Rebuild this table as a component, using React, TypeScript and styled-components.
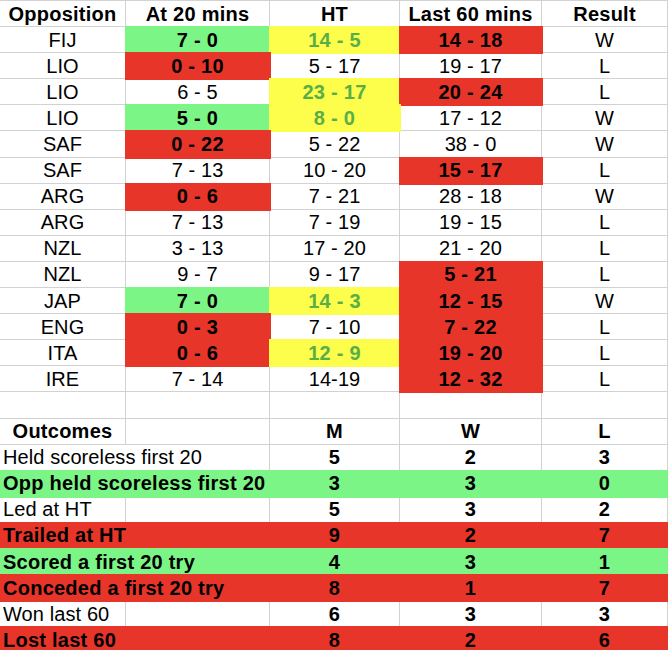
import React from "react";
import styled, { createGlobalStyle, css } from "styled-components";

const GlobalStyle = createGlobalStyle`
  html, body {
    margin: 0;
    padding: 0;
    background: #ffffff;
  }
  body {
    font-family: "Liberation Sans", Arial, sans-serif;
    overflow: hidden;
  }
`;

type Fill = "green" | "red" | "yellow";

const FILLS: Record<Fill, string> = {
  green: "#7cf587",
  red: "#e8352a",
  yellow: "#fdfd4c",
};

const LINE = "#d2d2d2";

const Sheet = styled.div`
  display: grid;
  grid-template-columns: 126px 144px 130px 142px 126px;
  grid-auto-rows: 26.1px;
  width: 668px;
  border-top: 1px solid ${LINE};
  font-family: "Liberation Sans", Arial, sans-serif;
  font-size: 20px;
  color: #000000;
`;

const Cell = styled.div<{
  $fill?: Fill;
  $bold?: boolean;
  $left?: boolean;
  $span?: number;
  $ink?: string;
}>`
  box-sizing: border-box;
  display: flex;
  align-items: center;
  justify-content: ${(p) => (p.$left ? "flex-start" : "center")};
  padding-top: 1px;
  padding-left: ${(p) => (p.$left ? "3px" : "0")};
  border-right: 1px solid ${LINE};
  border-bottom: 1px solid ${LINE};
  white-space: nowrap;
  overflow: visible;
  font-weight: ${(p) => (p.$bold ? 700 : 400)};
  letter-spacing: ${(p) => (p.$bold ? "0.25px" : "0.1px")};
  color: ${(p) => p.$ink ?? "#000000"};
  grid-column: ${(p) => (p.$span ? `span ${p.$span}` : "auto")};
  ${(p) =>
    p.$fill &&
    css`
      position: relative;
      z-index: 1;
      background: ${FILLS[p.$fill]};
      border-color: ${FILLS[p.$fill]};
      box-shadow: 0 0 0 1px ${FILLS[p.$fill]};
    `}
`;

type Score = { v: string; f?: Fill };

type Match = {
  opp: string;
  at20: Score;
  ht: Score;
  last: Score;
  res: string;
};

const matches: Match[] = [
  { opp: "FIJ", at20: { v: "7 - 0", f: "green" }, ht: { v: "14 - 5", f: "yellow" }, last: { v: "14 - 18", f: "red" }, res: "W" },
  { opp: "LIO", at20: { v: "0 - 10", f: "red" }, ht: { v: "5 - 17" }, last: { v: "19 - 17" }, res: "L" },
  { opp: "LIO", at20: { v: "6 - 5" }, ht: { v: "23 - 17", f: "yellow" }, last: { v: "20 - 24", f: "red" }, res: "L" },
  { opp: "LIO", at20: { v: "5 - 0", f: "green" }, ht: { v: "8 - 0", f: "yellow" }, last: { v: "17 - 12" }, res: "W" },
  { opp: "SAF", at20: { v: "0 - 22", f: "red" }, ht: { v: "5 - 22" }, last: { v: "38 - 0" }, res: "W" },
  { opp: "SAF", at20: { v: "7 - 13" }, ht: { v: "10 - 20" }, last: { v: "15 - 17", f: "red" }, res: "L" },
  { opp: "ARG", at20: { v: "0 - 6", f: "red" }, ht: { v: "7 - 21" }, last: { v: "28 - 18" }, res: "W" },
  { opp: "ARG", at20: { v: "7 - 13" }, ht: { v: "7 - 19" }, last: { v: "19 - 15" }, res: "L" },
  { opp: "NZL", at20: { v: "3 - 13" }, ht: { v: "17 - 20" }, last: { v: "21 - 20" }, res: "L" },
  { opp: "NZL", at20: { v: "9 - 7" }, ht: { v: "9 - 17" }, last: { v: "5 - 21", f: "red" }, res: "L" },
  { opp: "JAP", at20: { v: "7 - 0", f: "green" }, ht: { v: "14 - 3", f: "yellow" }, last: { v: "12 - 15", f: "red" }, res: "W" },
  { opp: "ENG", at20: { v: "0 - 3", f: "red" }, ht: { v: "7 - 10" }, last: { v: "7 - 22", f: "red" }, res: "L" },
  { opp: "ITA", at20: { v: "0 - 6", f: "red" }, ht: { v: "12 - 9", f: "yellow" }, last: { v: "19 - 20", f: "red" }, res: "L" },
  { opp: "IRE", at20: { v: "7 - 14" }, ht: { v: "14-19" }, last: { v: "12 - 32", f: "red" }, res: "L" },
];

type Outcome = {
  label: string;
  m: number;
  w: number;
  l: number;
  f?: Fill;
  wide?: boolean;
};

const outcomes: Outcome[] = [
  { label: "Held scoreless first 20", m: 5, w: 2, l: 3, wide: true },
  { label: "Opp held scoreless first 20", m: 3, w: 3, l: 0, f: "green", wide: true },
  { label: "Led at HT", m: 5, w: 3, l: 2 },
  { label: "Trailed at HT", m: 9, w: 2, l: 7, f: "red", wide: true },
  { label: "Scored a first 20 try", m: 4, w: 3, l: 1, f: "green", wide: true },
  { label: "Conceded a first 20 try", m: 8, w: 1, l: 7, f: "red", wide: true },
  { label: "Won last 60", m: 6, w: 3, l: 3 },
  { label: "Lost last 60", m: 8, w: 2, l: 6, f: "red", wide: true },
];

const ScoreCell: React.FC<{ s: Score }> = ({ s }) => (
  <Cell
    $fill={s.f}
    $bold={!!s.f}
    $ink={s.f === "yellow" ? "#5aae48" : undefined}
  >
    {s.v}
  </Cell>
);

export default function App() {
  return (
    <>
      <GlobalStyle />
      <Sheet>
        <Cell $bold>Opposition</Cell>
        <Cell $bold>At 20 mins</Cell>
        <Cell $bold>HT</Cell>
        <Cell $bold>Last 60 mins</Cell>
        <Cell $bold>Result</Cell>

        {matches.map((m, i) => (
          <React.Fragment key={i}>
            <Cell>{m.opp}</Cell>
            <ScoreCell s={m.at20} />
            <ScoreCell s={m.ht} />
            <ScoreCell s={m.last} />
            <Cell>{m.res}</Cell>
          </React.Fragment>
        ))}

        <Cell />
        <Cell />
        <Cell />
        <Cell />
        <Cell />

        <Cell $bold>Outcomes</Cell>
        <Cell />
        <Cell $bold>M</Cell>
        <Cell $bold>W</Cell>
        <Cell $bold>L</Cell>

        {outcomes.map((o, i) => (
          <React.Fragment key={i}>
            <Cell $left $fill={o.f} $bold={!!o.f} $span={o.wide ? 2 : undefined}>
              {o.label}
            </Cell>
            {!o.wide && <Cell />}
            <Cell $fill={o.f} $bold>{o.m}</Cell>
            <Cell $fill={o.f} $bold>{o.w}</Cell>
            <Cell $fill={o.f} $bold>{o.l}</Cell>
          </React.Fragment>
        ))}
      </Sheet>
    </>
  );
}
